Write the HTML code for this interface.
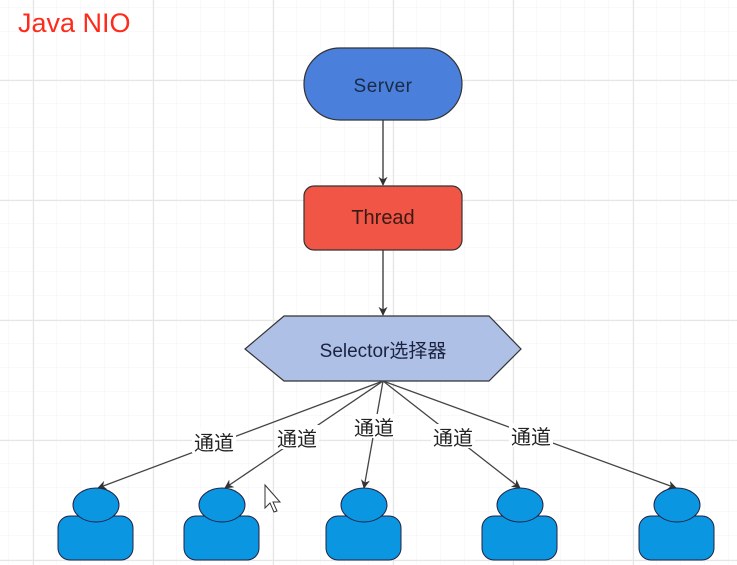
<!DOCTYPE html>
<html><head><meta charset="utf-8"><style>
html,body{margin:0;padding:0;background:#fff;width:737px;height:565px;overflow:hidden}
svg{display:block}
text{font-family:"Liberation Sans","Noto Sans CJK SC",sans-serif}
</style></head><body>
<svg width="737" height="565" viewBox="0 0 737 565">
<defs>
<pattern id="minor" width="24" height="24" patternUnits="userSpaceOnUse" x="9" y="8">
<path d="M24 0V24M0 24H24" fill="none" stroke="#f3f3f3" stroke-width="1"/>
</pattern>
<pattern id="major" width="120" height="120" patternUnits="userSpaceOnUse" x="33" y="80">
<path d="M0.5 0V120M0 0.5H120" fill="none" stroke="#e6e6e6" stroke-width="1.2"/>
</pattern>
<marker id="ar" viewBox="0 0 10 10" refX="9" refY="5" markerWidth="7" markerHeight="7" orient="auto">
<path d="M0 0L10 5L0 10L3 5Z" fill="#333"/>
</marker>
</defs>
<rect width="737" height="565" fill="url(#minor)"/>
<rect width="737" height="565" fill="url(#major)"/>
<text x="18" y="32" font-size="27" fill="#ff2a1a">Java NIO</text>

<rect x="304" y="48" width="158" height="72" rx="36" fill="#4a80dc" stroke="#333" stroke-width="1.2"/>
<text x="383" y="92" font-size="19" text-anchor="middle" fill="#1a2a44" letter-spacing="0.5">Server</text>
<line x1="383" y1="120" x2="383" y2="185" stroke="#333" stroke-width="1.3" marker-end="url(#ar)"/>
<rect x="304" y="186" width="158" height="64" rx="10" fill="#f05545" stroke="#333" stroke-width="1.2"/>
<text x="383" y="224" font-size="20" text-anchor="middle" fill="#3a1a14">Thread</text>
<line x1="383" y1="250" x2="383" y2="315" stroke="#333" stroke-width="1.3" marker-end="url(#ar)"/>
<polygon points="284,316 489,316 521,349 489,381 284,381 245,349" fill="#aec0e6" stroke="#333" stroke-width="1.2"/>
<text x="383" y="357" font-size="19" text-anchor="middle" fill="#1a2240">Selector选择器</text>

<g stroke="#444" stroke-width="1.3" marker-end="url(#ar)">
<line x1="383" y1="381" x2="98" y2="488"/>
<line x1="383" y1="381" x2="225" y2="488"/>
<line x1="383" y1="381" x2="364" y2="488"/>
<line x1="383" y1="381" x2="520" y2="488"/>
<line x1="383" y1="381" x2="676" y2="488"/>
</g>
<g font-size="20" fill="#222" text-anchor="middle">
<rect x="192" y="429" width="44" height="24" fill="#fff"/><text x="214" y="450">通道</text>
<rect x="275" y="425" width="44" height="24" fill="#fff"/><text x="297" y="446">通道</text>
<rect x="352" y="414" width="44" height="24" fill="#fff"/><text x="374" y="435">通道</text>
<rect x="431" y="424" width="44" height="24" fill="#fff"/><text x="453" y="445">通道</text>
<rect x="509" y="423" width="44" height="24" fill="#fff"/><text x="531" y="444">通道</text>
</g>

<g fill="#0a96e0" stroke="#224" stroke-width="1">
<g transform="translate(96,0)"><rect x="-38" y="516" width="75" height="44" rx="12"/><ellipse cx="0" cy="505" rx="23" ry="17"/></g>
<g transform="translate(222,0)"><rect x="-38" y="516" width="75" height="44" rx="12"/><ellipse cx="0" cy="505" rx="23" ry="17"/></g>
<g transform="translate(364,0)"><rect x="-38" y="516" width="75" height="44" rx="12"/><ellipse cx="0" cy="505" rx="23" ry="17"/></g>
<g transform="translate(520,0)"><rect x="-38" y="516" width="75" height="44" rx="12"/><ellipse cx="0" cy="505" rx="23" ry="17"/></g>
<g transform="translate(677,0)"><rect x="-38" y="516" width="75" height="44" rx="12"/><ellipse cx="0" cy="505" rx="23" ry="17"/></g>
</g>
<path d="M265 485L265 508L270 503L274 512L277 511L273 502L280 502Z" fill="#fff" stroke="#333" stroke-width="1"/>
</svg>
</body></html>
